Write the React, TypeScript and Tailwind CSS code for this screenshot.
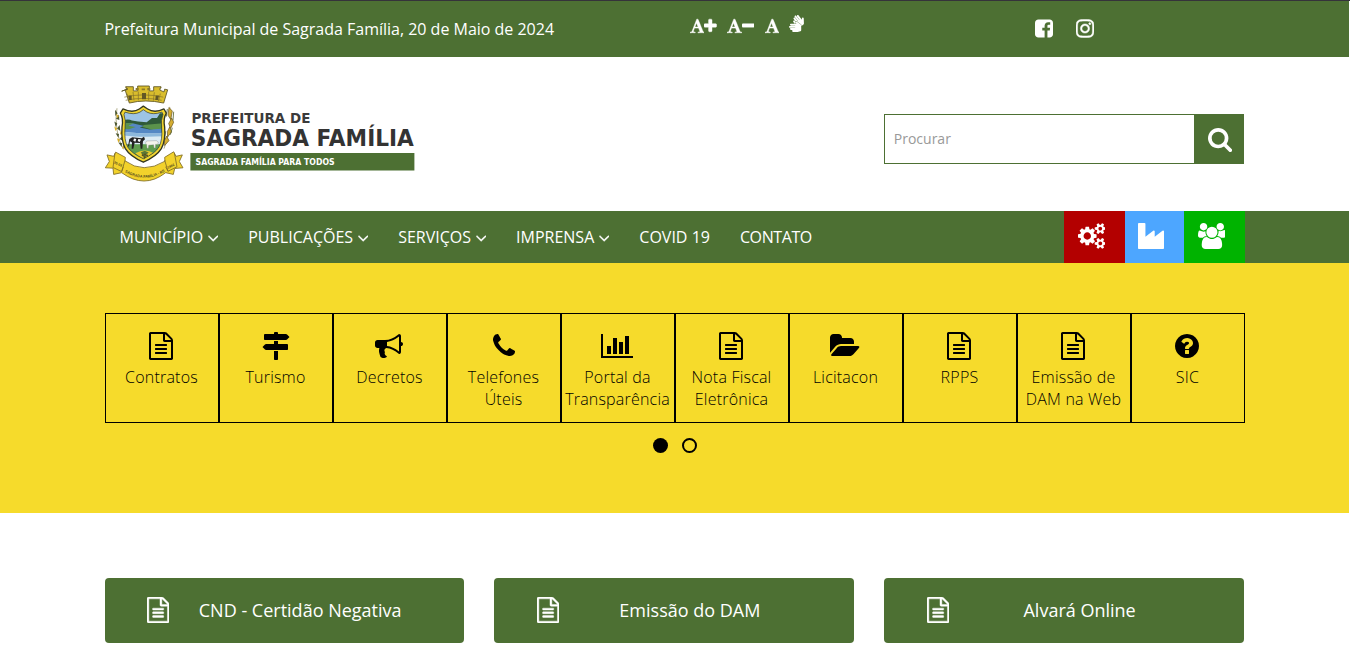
import React from "react";
import { FaSignLanguage } from "react-icons/fa";

type Glyph = { box: string; d: string };

const glyphs = {
  font: {
    box: "64 0 1664 1792",
    d: "M789 559l-170 450q33 0 136.5 2t160.5 2q19 0 57-2-87-253-184-452zm-725 1105l2-79q23-7 56-12.5t57-10.5 49.5-14.5 44.5-29 31-50.5l237-616 280-724h128q8 14 11 21l205 480q33 78 106 257.5t114 274.5q15 34 58 144.5t72 168.5q20 45 35 57 19 15 88 29.5t84 20.5q6 38 6 57 0 5-.5 13.5t-.5 12.5q-63 0-190-8t-191-8q-76 0-215 7t-178 8q0-43 4-78l131-28q1 0 12.5-2.5t15.5-3.5 14.5-4.5 15-6.5 11-8 9-11 2.5-14q0-16-31-96.5t-72-177.5-42-100l-450-2q-26 58-76.5 195.5t-50.5 162.5q0 22 14 37.5t43.5 24.5 48.5 13.5 57 8.5 41 4q1 19 1 58 0 9-2 27-58 0-174.5-10t-174.5-10q-8 0-26.5 4t-21.5 4q-80 14-188 14z",
  },
  plus: {
    box: "192 0 1408 1792",
    d: "M1600 736v192q0 40-28 68t-68 28h-416v416q0 40-28 68t-68 28h-192q-40 0-68-28t-28-68v-416h-416q-40 0-68-28t-28-68v-192q0-40 28-68t68-28h416v-416q0-40 28-68t68-28h192q40 0 68 28t28 68v416h416q40 0 68 28t28 68z",
  },
  minus: {
    box: "192 0 1408 1792",
    d: "M1600 736v192q0 40-28 68t-68 28h-1216q-40 0-68-28t-28-68v-192q0-40 28-68t68-28h1216q40 0 68 28t28 68z",
  },
  facebook: {
    box: "128 0 1536 1792",
    d: "M1376 128q119 0 203.5 84.5t84.5 203.5v960q0 119-84.5 203.5t-203.5 84.5h-188v-595h199l30-232h-229v-148q0-56 23.5-84t91.5-28l122-1v-207q-63-9-178-9-136 0-217.5 80t-81.5 226v171h-200v232h200v595h-532q-119 0-203.5-84.5t-84.5-203.5v-960q0-119 84.5-203.5t203.5-84.5h960z",
  },
  instagram: {
    box: "128 0 1536 1792",
    d: "M1152 896q0-106-75-181t-181-75-181 75-75 181 75 181 181 75 181-75 75-181zm138 0q0 164-115 279t-279 115-279-115-115-279 115-279 279-115 279 115 115 279zm108-410q0 38-27 65t-65 27-65-27-27-65 27-65 65-27 65 27 27 65zm-502-220q-7 0-76.5-.5t-105.5 0-96.5 3-103 10-71.5 18.5q-50 20-88 58t-58 88q-11 29-18.5 71.5t-10 103-3 96.5 0 105.5.5 76.5-.5 76.5 0 105.5 3 96.5 10 103 18.5 71.5q20 50 58 88t88 58q29 11 71.5 18.5t103 10 96.5 3 105.5 0 76.5-.5 76.5.5 105.5 0 96.5-3 103-10 71.5-18.5q50-20 88-58t58-88q11-29 18.5-71.5t10-103 3-96.5 0-105.5-.5-76.5.5-76.5 0-105.5-3-96.5-10-103-18.5-71.5q-20-50-58-88t-88-58q-29-11-71.5-18.5t-103-10-96.5-3-105.5 0-76.5.5zm768 630q0 229-5 317-10 208-124 322t-322 124q-88 5-317 5t-317-5q-208-10-322-124t-124-322q-5-88-5-317t5-317q10-208 124-322t322-124q88-5 317-5t317 5q208 10 322 124t124 322q5 88 5 317z",
  },
  search: {
    box: "64 64 1664 1792",
    d: "M1216 832q0-185-131.5-316.5t-316.5-131.5-316.5 131.5-131.5 316.5 131.5 316.5 316.5 131.5 316.5-131.5 131.5-316.5zm512 832q0 52-38 90t-90 38q-54 0-90-38l-343-342q-179 124-399 124-143 0-273.5-55.5t-225-150-150-225-55.5-273.5 55.5-273.5 150-225 225-150 273.5-55.5 273.5 55.5 225 150 150 225 55.5 273.5q0 220-124 399l343 343q37 37 37 90z",
  },
  angleDown: {
    box: "384 0 1024 1792",
    d: "M1395 736q0 13-10 23l-466 466q-10 10-23 10t-23-10l-466-466q-10-10-10-23t10-23l50-50q10-10 23-10t23 10l393 393 393-393q10-10 23-10t23 10l50 50q10 10 10 23z",
  },
  cogs: {
    box: "0 0 1920 1792",
    d: "M896 896q0-106-75-181t-181-75-181 75-75 181 75 181 181 75 181-75 75-181zm768 512q0-52-38-90t-90-38-90 38-38 90q0 53 37.5 90.5t90.5 37.5 90.5-37.5 37.5-90.5zm0-1024q0-52-38-90t-90-38-90 38-38 90q0 53 37.5 90.5t90.5 37.5 90.5-37.5 37.5-90.5zm-384 421v185q0 10-7 19.5t-16 10.5l-155 24q-11 35-32 76 34 48 90 115 7 11 7 20 0 12-7 19-23 30-82.5 89.5t-78.5 59.5q-11 0-21-7l-115-90q-37 19-77 31-11 108-23 155-7 24-30 24h-186q-11 0-20-7.5t-10-17.5l-23-153q-34-10-75-31l-118 89q-7 7-20 7-11 0-21-8-144-133-144-160 0-9 7-19 10-14 41-53t47-61q-23-44-35-82l-152-24q-10-1-17-9.5t-7-19.5v-185q0-10 7-19.5t16-10.5l155-24q11-35 32-76-34-48-90-115-7-11-7-20 0-12 7-20 22-30 82-89t79-59q11 0 21 7l115 90q34-18 77-32 11-108 23-154 7-24 30-24h186q11 0 20 7.5t10 17.5l23 153q34 10 75 31l118-89q8-7 20-7 11 0 21 8 144 133 144 160 0 9-7 19-12 16-42 54t-45 60q23 48 34 82l152 23q10 2 17 10.5t7 19.5zm640 533v140q0 16-149 31-12 27-30 52 51 113 51 138 0 4-4 7-122 71-124 71-8 0-46-47t-52-68q-20 2-30 2t-30-2q-14 21-52 68t-46 47q-2 0-124-71-4-3-4-7 0-25 51-138-18-25-30-52-149-15-149-31v-140q0-16 149-31 13-29 30-52-51-113-51-138 0-4 4-7 4-2 35-20t59-34 30-16q8 0 46 46.5t52 67.5q20-2 30-2t30 2q51-71 92-112l6-2q4 0 124 70 4 3 4 7 0 25-51 138 17 23 30 52 149 15 149 31zm0-1024v140q0 16-149 31-12 27-30 52 51 113 51 138 0 4-4 7-122 71-124 71-8 0-46-47t-52-68q-20 2-30 2t-30-2q-14 21-52 68t-46 47q-2 0-124-71-4-3-4-7 0-25 51-138-18-25-30-52-149-15-149-31v-140q0-16 149-31 13-29 30-52-51-113-51-138 0-4 4-7 4-2 35-20t59-34 30-16q8 0 46 46.5t52 67.5q20-2 30-2t30 2q51-71 92-112l6-2q4 0 124 70 4 3 4 7 0 25-51 138 17 23 30 52 149 15 149 31z",
  },
  industry: {
    box: "0 0 1792 1792",
    d: "M448 0q26 0 45 19t19 45v891l536-429q17-14 40-14 26 0 45 19t19 45v379l536-429q17-14 40-14 26 0 45 19t19 45v1152q0 26-19 45t-45 19h-1664q-26 0-45-19t-19-45v-1664q0-26 19-45t45-19h384z",
  },
  group: {
    box: "64 0 1920 1792",
    d: "M657 896q-162 5-265 128h-134q-82 0-138-40.5t-56-118.5q0-353 124-353 6 0 43.5 21t97.5 42.5 119 21.5q67 0 133-23-5 37-5 66 0 159 93 293zm1071 637q0 120-73 189.5t-194 69.5h-874q-121 0-194-69.5t-73-189.5q0-53 3.5-103.5t14-109 26.5-108.5 43-97.5 62-81 85.5-53.5 111.5-20q10 0 43 21.5t73 48 107 48 135 21.5 135-21.5 107-48 73-48 43-21.5q61 0 111.5 20t85.5 53.5 62 81 43 97.5 26.5 108.5 14 109 3.5 103.5zm-1024-1277q0 106-75 181t-181 75-181-75-75-181 75-181 181-75 181 75 75 181zm704 384q0 159-112.5 271.5t-271.5 112.5-271.5-112.5-112.5-271.5 112.5-271.5 271.5-112.5 271.5 112.5 112.5 271.5zm576 225q0 78-56 118.5t-138 40.5h-134q-103-123-265-128 93-134 93-293 0-29-5-66 66 23 133 23 59 0 119-21.5t97.5-42.5 43.5-21q124 0 124 353zm-128-609q0 106-75 181t-181 75-181-75-75-181 75-181 181-75 181 75 75 181z",
  },
  fileText: {
    box: "128 0 1536 1792",
    d: "M1596 380q28 28 48 76t20 88v1152q0 40-28 68t-68 28h-1344q-40 0-68-28t-28-68v-1600q0-40 28-68t68-28h896q40 0 88 20t76 48zm-444-244v376h376q-10-29-22-41l-313-313q-12-12-41-22zm384 1528v-1024h-416q-40 0-68-28t-28-68v-416h-768v1536h1280zm-1024-864q0-14 9-23t23-9h704q14 0 23 9t9 23v64q0 14-9 23t-23 9h-704q-14 0-23-9t-9-23v-64zm736 224q14 0 23 9t9 23v64q0 14-9 23t-23 9h-704q-14 0-23-9t-9-23v-64q0-14 9-23t23-9h704zm0 256q14 0 23 9t9 23v64q0 14-9 23t-23 9h-704q-14 0-23-9t-9-23v-64q0-14 9-23t23-9h704z",
  },
  mapSigns: {
    box: "0 0 1792 1792",
    d: "M1745 297q10 10 10 23t-10 23l-141 141q-28 28-68 28h-1344q-26 0-45-19t-19-45v-256q0-26 19-45t45-19h576v-64q0-26 19-45t45-19h128q26 0 45 19t19 45v64h512q40 0 68 28zm-977 919h256v512q0 26-19 45t-45 19h-128q-26 0-45-19t-19-45v-512zm832-448q26 0 45 19t19 45v256q0 26-19 45t-45 19h-1344q-40 0-68-28l-141-141q-10-10-10-23t10-23l141-141q28-28 68-28h512v-192h256v192h576z",
  },
  bullhorn: {
    box: "0 0 1792 1792",
    d: "M1664 640q53 0 90.5 37.5t37.5 90.5-37.5 90.5-90.5 37.5v384q0 52-38 90t-90 38q-417-347-812-380-58 19-91 66t-31 100.5 40 92.5q-20 33-23 65.5t6 58 33.5 55 48 50 61.5 50.5q-29 58-111.5 83t-168.5 11.5-132-55.5q-7-23-29.5-87.5t-32-94.5-23-89-15-101 3.5-98.5 22-110.5h-122q-66 0-113-47t-47-113v-192q0-66 47-113t113-47h480q435 0 896-384 52 0 90 38t38 90v384zm-128 604v-954q-394 302-768 343v270q377 42 768 341z",
  },
  phone: {
    box: "192 0 1408 1792",
    d: "M1600 1240q0 27-10 70.5t-21 68.5q-21 50-122 106-94 51-186 51-27 0-53-3.5t-57.5-12.5-47-14.5-55.5-20.5-49-18q-98-35-175-83-127-79-264-216t-216-264q-48-77-83-175-3-9-18-49t-20.5-55.5-14.5-47-12.5-57.5-3.5-53q0-92 51-186 56-101 106-122 25-11 68.5-21t70.5-10q14 0 21 3 18 6 53 76 11 19 30 54t35 63.5 31 53.5q3 4 17.5 25t21.5 35.5 7 28.5q0 20-28.5 50t-62 55-62 53-28.5 46q0 9 5 22.5t8.5 20.5 14 24 11.5 19q76 137 174 235t235 174q2 1 19 11.5t24 14 20.5 8.5 22.5 5q18 0 46-28.5t53-62 55-62 50-28.5q14 0 28.5 7t35.5 21.5 25 17.5q25 15 53.5 31t63.5 35 54 30q70 35 76 53 3 7 3 21z",
  },
  barChart: {
    box: "0 0 2048 1792",
    d: "M640 896v512h-256v-512h256zm384-512v1024h-256v-1024h256zm1024 1152v128h-2048v-1536h128v1408h1920zm-640-896v768h-256v-768h256zm384-384v1152h-256v-1152h256z",
  },
  folderOpen: {
    box: "64 0 1920 1792",
    d: "M1943 952q0 31-31 66l-336 396q-43 51-120.5 86.5t-143.5 35.5h-1088q-34 0-60.5-13t-26.5-43q0-31 31-66l336-396q43-51 120.5-86.5t143.5-35.5h1088q34 0 60.5 13t26.5 43zm-343-344v160h-832q-94 0-197 47.5t-164 119.5l-337 396-5 6q0-4-.5-12.5t-.5-12.5v-960q0-92 66-158t158-66h320q92 0 158 66t66 158v32h544q92 0 158 66t66 158z",
  },
  question: {
    box: "128 0 1536 1792",
    d: "M1024 1376v-192q0-14-9-23t-23-9h-192q-14 0-23 9t-9 23v192q0 14 9 23t23 9h192q14 0 23-9t9-23zm256-672q0-88-55.5-163t-138.5-116-170-41q-243 0-371 213-15 24 8 42l132 100q7 6 19 6 16 0 25-12 53-68 86-92 34-24 86-24 48 0 85.5 26t37.5 59q0 38-20 61t-68 45q-63 28-115.5 86.5t-52.5 125.5v36q0 14 9 23t23 9h192q14 0 23-9t9-23q0-19 21.5-49.5t54.5-49.5q32-18 49-28.5t46-35 44.5-48 28-60.5 12.5-81zm384 192q0 209-103 385.5t-279.5 279.5-385.5 103-385.5-103-279.5-279.5-103-385.5 103-385.5 279.5-279.5 385.5-103 385.5 103 279.5 279.5 103 385.5z",
  },
} satisfies Record<string, Glyph>;

type IconName = keyof typeof glyphs;

function Icon({ name, className }: { name: IconName; className: string }) {
  const glyph = glyphs[name];
  return (
    <svg viewBox={glyph.box} className={`w-auto shrink-0 fill-current ${className}`} aria-hidden="true">
      <path d={glyph.d} />
    </svg>
  );
}

function Crest() {
  return (
    <g transform="translate(-10 -4.95) scale(0.33333 0.348)" strokeLinejoin="round">
      {/* mural crown */}
      <path
        d="M80 35l14-5v-6h-2v-2h23v12h13v-14h35v14h13v-12h22v4h-3v6l12 5 2-8 9 2-12 38q-55-12-103 0l-12-36 8-5z"
        fill="#d9bd2d"
        stroke="#5d5420"
        strokeWidth="2.5"
      />
      <path d="M96 42l6 22M114 37l3 24M130 36v25M161 36v25M178 38l-3 24M196 42l-6 22M88 52q57-13 117 0M92 61q54-11 108 0" fill="none" stroke="#81702a" strokeWidth="2" />
      <path d="M100 47h10v13h-8zM141 40h12v18h-12zM182 47h10l-3 13h-8z" fill="#625725" />
      <path d="M122 26h9v6h-9zM157 26h9v6h-9zM140 27h10v5h-10z" fill="#8c7a2b" />
      {/* coffee and corn branches */}
      <path d="M66 84q-6 28 0 62t20 56M224 80q8 30 0 64t-17 56" fill="none" stroke="#8a8550" strokeWidth="2" />
      <path d="M60 88l8 10-7 8zM72 102l-9 12 10 4zM58 122l9 6-5 10zM74 132l-8 10 10 7zM62 156l10 2-2 11zM82 164l-8 8 11 7zM70 182l11 2-1 11z" fill="#4b5630" />
      <path d="M64 100l8 6-6 7zM58 136l9 6-6 7zM77 148l6 7-8 5zM66 170l9 4-5 9zM84 190l7 7-9 3z" fill="#d8ae27" />
      <path d="M222 82l10 10-5 24-8-12zM230 112l6 12-9 18-6-14zM224 138l6 14-12 14-1-15zM215 164l7 13-13 14-1-14z" fill="#d4ad31" stroke="#675622" strokeWidth="2" />
      <path d="M217 86l-3 22M236 94l-2 25M232 140l-6 20M212 150l-4 20" fill="none" stroke="#5d6a38" strokeWidth="2.5" />
      {/* ribbon */}
      <path
        d="M36 218l20 4 6-12 29 15-1 10q55 39 120 1l-1-11 27-16 7 13 19-4-9 19 11 18-25 2-4 17-23-5q-64 48-132 0l-24 5-2-18-23-1 12-18z"
        fill="#f2d22b"
        stroke="#806d24"
        strokeWidth="2.5"
      />
      <path d="M60 213l-6 41 26 12 10-32M238 212l8 40-27 13-10-32M80 266l5-14M219 265l-7-13" fill="none" stroke="#806d24" strokeWidth="2.5" />
      {/* shield */}
      <path
        d="M84 86q29 13 49 0l12-8 13 8q20 13 49 0l7 12q-10 15-5 40 3 39-10 62-14 22-54 39-40-17-54-39-13-23-10-62 5-25-5-40z"
        fill="#f1d52f"
        stroke="#343820"
        strokeWidth="4"
      />
      <clipPath id="field">
        <path d="M90 95q27 9 45 0l10-7 11 7q18 9 45 0l3 7q-7 15-4 39 3 34-8 54-11 18-47 34-36-16-47-34-11-20-8-54 3-24-3-39z" />
      </clipPath>
      <g clipPath="url(#field)">
        <path d="M80 70h140v160H80z" fill="#9dc4e4" />
        <path d="M80 119q20-5 31 0l18 3 26 2 16-12 15 0 9-14h20v54H80z" fill="#2f5a38" />
        <path d="M80 130q20-7 45 0l23 5-14 4 30 6 46-6v20H80z" fill="#5588c4" />
        <path d="M80 126l36 1-16 7 22 4-20 6-22-1zM146 132l61-5v15l-37 3-27-7z" fill="#5b924b" />
        <path d="M80 150q40 8 130 6v32H80z" fill="#dcebf4" />
        <path d="M80 150q40 8 130 6v8q-80 4-130-3z" fill="#8db8dc" />
        <path d="M80 187h140v60H80z" fill="#5f9c4e" />
        <path d="M121 213q29-16 56 0l-28 22z" fill="#e8c92b" />
      </g>
      <path
        d="M90 95q27 9 45 0l10-7 11 7q18 9 45 0l3 7q-7 15-4 39 3 34-8 54-11 18-47 34-36-16-47-34-11-20-8-54 3-24-3-39z"
        fill="none"
        stroke="#343820"
        strokeWidth="2"
      />
      {/* cattle */}
      <path d="M103 172l9-5 28 3 7-4 3 7-6 6-2 21h-5l-2-16-16-1-4 17h-5l1-18-6-3-3 15-3-1z" fill="#222" />
      <path d="M117 171l7 1-3 8-6-3zM130 172l8 2-4 7-6-3z" fill="#fff" />
      <path d="M151 184l4-6 29-1 6 4-2 7-6-1-1 11h-4l-1-9-15 1-1 9h-4l-1-11z" fill="#f5f4ed" stroke="#777" />
      {/* grapes */}
      <path d="M137 211l12-5 12 5-6 5-6 15-7-14z" fill="#5c7735" />
      <g fill="#594f21">
        <circle cx="143" cy="219" r="3" />
        <circle cx="150" cy="217" r="3" />
        <circle cx="156" cy="220" r="3" />
        <circle cx="149" cy="225" r="3" />
      </g>
      <path id="band" d="M86 265q63 39 130-3" fill="none" />
      <text fontFamily="Liberation Sans" fontSize="11" fontWeight="700" fill="#594e20">
        <textPath href="#band" startOffset="4">SAGRADA FAMÍLIA - RS</textPath>
      </text>
      <text x="56" y="242" fontFamily="Liberation Sans" fontSize="10" fontWeight="700" fill="#594e20" transform="rotate(24 56 242)">20-03</text>
      <text x="219" y="258" fontFamily="Liberation Sans" fontSize="10" fontWeight="700" fill="#594e20" transform="rotate(-26 219 258)">1992</text>
    </g>
  );
}

function Logo() {
  return (
    <svg width="350" height="100" viewBox="0 0 350 100" className="shrink-0" role="img">
      <Crest />
      <rect x="85.4" y="69" width="224" height="17.5" fill="#4d7033" />
      <g fontFamily="DejaVu Sans" fontWeight="700">
        <text x="86.4" y="39.3" fontSize="14.4" fill="#3b3b3b" textLength="119" lengthAdjust="spacingAndGlyphs">PREFEITURA DE</text>
        <text x="85.8" y="62" fontSize="22.8" fill="#333" textLength="223" lengthAdjust="spacingAndGlyphs">SAGRADA FAMÍLIA</text>
        <text x="90.6" y="81" fontSize="8.8" fill="#fff" textLength="139" lengthAdjust="spacingAndGlyphs">SAGRADA FAMÍLIA PARA TODOS</text>
      </g>
    </svg>
  );
}

const menu: { label: string; sub: boolean; tracking?: string }[] = [
  { label: "MUNICÍPIO", sub: true },
  { label: "PUBLICAÇÕES", sub: true },
  { label: "SERVIÇOS", sub: true },
  { label: "IMPRENSA", sub: true },
  { label: "COVID 19", sub: false },
  { label: "CONTATO", sub: false, tracking: "tracking-[-0.4px]" },
];

const shortcuts: { label: string; icon: IconName; nudge?: string }[] = [
  { label: "Contratos", icon: "fileText" },
  { label: "Turismo", icon: "mapSigns", nudge: "mr-0" },
  { label: "Decretos", icon: "bullhorn" },
  { label: "Telefones Úteis", icon: "phone", nudge: "mr-0" },
  { label: "Portal da Transparência", icon: "barChart" },
  { label: "Nota Fiscal Eletrônica", icon: "fileText" },
  { label: "Licitacon", icon: "folderOpen" },
  { label: "RPPS", icon: "fileText" },
  { label: "Emissão de DAM na Web", icon: "fileText" },
  { label: "SIC", icon: "question" },
];

const services = ["CND - Certidão Negativa", "Emissão do DAM", "Alvará Online"];

export default function App() {
  return (
    <div className="h-[653px] overflow-hidden bg-white font-['Open_Sans',sans-serif] text-base">
      <div className="h-px bg-[#35333a]" />
      <div className="mr-px">
        <div className="h-14 bg-[#4d7033] text-white">
          <div className="mx-auto flex h-full w-[1140px]">
            <p className="w-[585px] leading-[56px] tracking-[-0.01px]">Prefeitura Municipal de Sagrada Família, 20 de Maio de 2024</p>
            <div className="flex w-[345px] items-start pt-[17px]">
              <a className="flex w-[37.5px]">
                <Icon name="font" className="h-4 stroke-current [stroke-width:50]" />
                <Icon name="plus" className="h-4 stroke-current [stroke-width:50]" />
              </a>
              <a className="flex w-[37.5px]">
                <Icon name="font" className="h-4 stroke-current [stroke-width:50]" />
                <Icon name="minus" className="h-4 stroke-current [stroke-width:50]" />
              </a>
              <Icon name="font" className="h-4 stroke-current [stroke-width:50]" />
              <FaSignLanguage className="-mt-[3px] ml-[9px] h-[17px] w-[17px]" />
            </div>
            <div className="-mt-px flex items-center gap-[23px]">
              <Icon name="facebook" className="h-[21px]" />
              <Icon name="instagram" className="h-[21px] stroke-current [stroke-width:40]" />
            </div>
          </div>
        </div>

        <header className="ml-[104.6px] flex h-[154px] w-[1139.2px] items-center justify-between">
          <Logo />
          <form className="mt-[10px] flex h-[50px] w-[360px]">
            <input
              placeholder="Procurar"
              className="min-w-0 flex-1 border border-[#4d7033] px-[9px] pb-px text-sm outline-none placeholder:text-[#999]"
            />
            <button type="button" className="flex w-[48.6px] items-center justify-center bg-[#4d7033] pl-px text-white">
              <Icon name="search" className="mt-px h-[26px]" />
            </button>
          </form>
        </header>

        <nav className="h-[52px] bg-[#4d7033] text-white">
          <div className="mx-auto flex h-full w-[1140px]">
            {menu.map((item) => (
              <a key={item.label} className={`flex items-center px-[15px] whitespace-nowrap ${item.tracking ?? ""}`}>
                {item.label}
                {item.sub && <Icon name="angleDown" className="mt-px ml-[4.8px] h-[18px] stroke-current [stroke-width:30]" />}
              </a>
            ))}
            <div className="ml-auto flex">
              <a className="flex w-[61px] bg-[#b30000] pt-3 pl-[14px]">
                <Icon name="cogs" className="h-[26px]" />
              </a>
              <a className="flex w-[59px] bg-[#4da6ff] pt-3 pl-[13.5px]">
                <Icon name="industry" className="h-[26px]" />
              </a>
              <a className="flex w-[61px] bg-[#00b300] pt-3 pl-[14px]">
                <Icon name="group" className="h-[26px]" />
              </a>
            </div>
          </div>
        </nav>

        <section className="h-[250px] bg-[#f6db2b] pt-[50px]">
          <div className="mx-auto flex w-[1140px]">
            {shortcuts.map((s) => (
              <a key={s.label} className="flex h-[110px] w-[114px] flex-col items-center border border-black pt-[18px] text-black">
                <Icon name={s.icon} className={`h-7 ${s.nudge ?? "mr-px"}`} />
                <span className="mt-[6px] max-w-[108px] text-center leading-[22px] font-light tracking-[0.2px]">{s.label}</span>
              </a>
            ))}
          </div>
          <div className="mt-[15px] flex justify-center gap-[14px]">
            <span className="h-[15px] w-[15px] rounded-full bg-black" />
            <span className="h-[15px] w-[15px] rounded-full border-2 border-black" />
          </div>
        </section>

        <section className="mt-[65px] ml-[104.6px] grid w-[1139.2px] grid-cols-3 gap-[30px]">
          {services.map((label) => (
            <a key={label} className="flex h-[65px] items-center rounded bg-[#4d7033] pr-[33.4px] pb-[2px] pl-[42.5px] text-white">
              <Icon name="fileText" className="h-[26px] stroke-current [stroke-width:30]" />
              <span className="flex-1 text-center text-lg">{label}</span>
            </a>
          ))}
        </section>
      </div>
    </div>
  );
}
